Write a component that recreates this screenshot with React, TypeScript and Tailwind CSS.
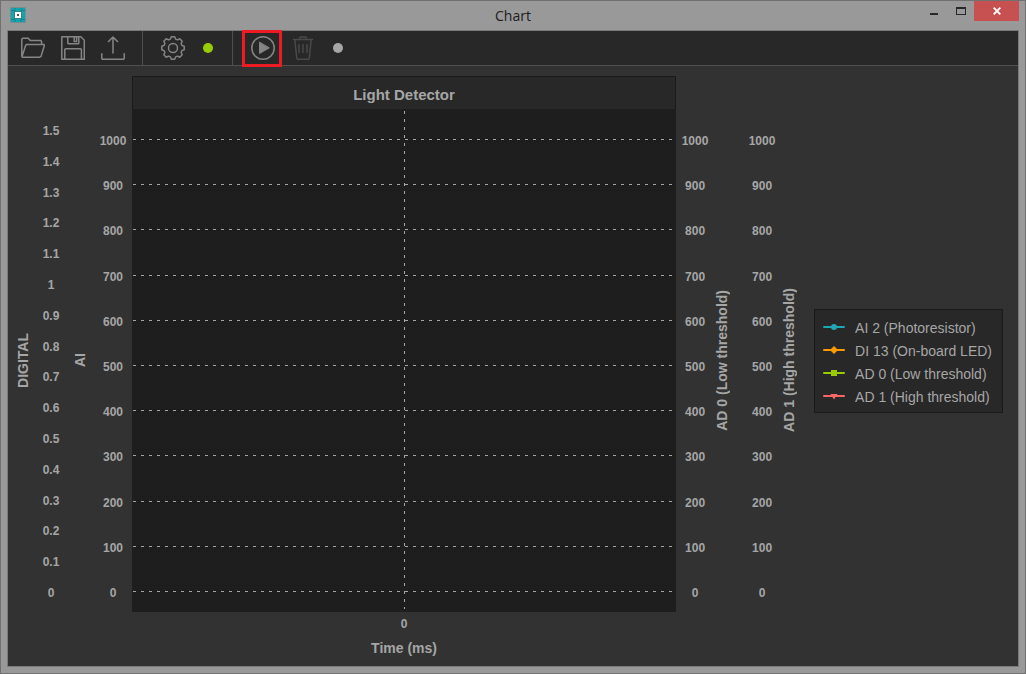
import type { ReactNode } from "react";

const DIGITAL_TICKS = ["1.5", "1.4", "1.3", "1.2", "1.1", "1", "0.9", "0.8", "0.7", "0.6", "0.5", "0.4", "0.3", "0.2", "0.1", "0"];
const ANALOG_TICKS = ["1000", "900", "800", "700", "600", "500", "400", "300", "200", "100", "0"];

const SERIES = [
  { label: "AI 2 (Photoresistor)", color: "#1ea7b4", marker: <circle cx="11" cy="4" r="3" /> },
  { label: "DI 13 (On-board LED)", color: "#ff9900", marker: <path d="M11 0l4 4-4 4-4-4z" /> },
  { label: "AD 0 (Low threshold)", color: "#99cc00", marker: <path d="M8 1h6v6H8z" /> },
  { label: "AD 1 (High threshold)", color: "#ff6666", marker: <path d="M7.5 2h7L11 7.5z" /> },
];

function ToolIcon({ children }: { children: ReactNode }) {
  return (
    <svg viewBox="0 0 24 24" className="size-6" fill="none" stroke="currentColor" strokeWidth="1.5" strokeLinejoin="round" strokeLinecap="round">
      {children}
    </svg>
  );
}

interface ToolButtonProps {
  label: string;
  disabled?: boolean;
  highlighted?: boolean;
  children: ReactNode;
}

function ToolButton({ label, disabled, highlighted, children }: ToolButtonProps) {
  return (
    <button
      type="button"
      aria-label={label}
      disabled={disabled}
      className="relative flex w-10 items-center justify-center text-[#858585] disabled:text-[#494949]"
    >
      <ToolIcon>{children}</ToolIcon>
      {highlighted && <span className="absolute -top-px -bottom-0.5 -left-px z-10 w-full border-3 border-[#ed1c24]" />}
    </button>
  );
}

function AxisTitle({ children }: { children: ReactNode }) {
  return (
    <div className="flex items-center justify-center pt-8">
      <span className="rotate-180 text-sm leading-4 font-bold whitespace-nowrap [writing-mode:vertical-rl]">{children}</span>
    </div>
  );
}

function AnalogTicks() {
  return (
    <div className="flex w-[38px] flex-col items-center justify-between justify-self-end pt-[57px] pb-[11px]">
      {ANALOG_TICKS.map((tick) => (
        <span key={tick} className="text-xs leading-4 font-bold">{tick}</span>
      ))}
    </div>
  );
}

function TitleBar() {
  return (
    <header className="grid h-[29px] grid-cols-[1fr_auto_1fr] items-start">
      <svg viewBox="0 0 16 16" className="mt-1.5 ml-[9px] size-4">
        <rect width="16" height="16" fill="#7d8b8c" />
        <rect x="1" y="1" width="14" height="14" fill="#0fa5b1" />
        <path d="M5 1v2.500H1M11 1v2.500h4M5 15v-2.500H1M11 15v-2.500h4" fill="none" stroke="#17818a" />
        <rect x="4.500" y="4.500" width="7" height="7" fill="#fff" stroke="#3b7f86" />
        <rect x="7" y="7" width="2" height="2" fill="#555" />
      </svg>
      <h1 className="pt-[5px] font-['Open_Sans',sans-serif] text-sm leading-5 text-[#1c1c1c]">Chart</h1>
      <div className="mr-1.5 flex justify-end">
        <button type="button" aria-label="Minimize" className="flex h-5 w-[27px] items-center justify-center">
          <svg viewBox="0 0 10 10" className="size-2.5"><path d="M1 7h8v2H1z" fill="#282828" /></svg>
        </button>
        <button type="button" aria-label="Maximize" className="flex h-5 w-[27px] items-center justify-center">
          <svg viewBox="0 0 10 8" className="h-2 w-2.5" shapeRendering="crispEdges">
            <path fillRule="evenodd" d="M0 0h10v8H0zM1 2v5h8V2z" fill="#282828" />
          </svg>
        </button>
        <button type="button" aria-label="Close" className="flex h-5 w-[45px] items-center justify-center bg-[#c75050]">
          <svg viewBox="0 0 8 8" className="size-2"><path d="M.7.7l6.600 6.600M7.300.7L.7 7.300" stroke="#fff" strokeWidth="1.900" /></svg>
        </button>
      </div>
    </header>
  );
}

function Toolbar() {
  return (
    <div className="flex h-[35px] items-stretch border-b border-[#505050] bg-[#282828] pl-[5px]">
      <ToolButton label="Open">
        <path d="M.8 20V3.200l1-1h5.500l1.900 2.200h10.400l1 1v2.800M1 20.800L4.600 9.400l1.100-1h17.200l.5.900L20 20.400l-1.200.8H1.500z" />
      </ToolButton>
      <ToolButton label="Save">
        <path d="M.8.800h19l3.500 3.500v19H.8zM6.800.800v6.500l.8.500h9.400l.8-.5V.8M13.200 1h2.400v4.400h-2.400zM3.800 23V13.400l.8-.6h15l.8.600V23" />
      </ToolButton>
      <ToolButton label="Export">
        <path d="M12 17V1M7.500 5.500L12 1l4.500 4.500M.8 17.800v4.900l.6.500h21.200l.6-.5v-4.900" />
      </ToolButton>
      <div className="mr-2.5 ml-[9px] w-px bg-[#505050]" />
      <ToolButton label="Settings">
        <circle cx="12" cy="12" r="4.500" />
        <path d="M10.300.8h3.400l.9 2.300 1.900.8 2.300-1.100 2.400 2.400-1.100 2.300.8 1.900 2.300.9v3.400l-2.300.9-.8 1.900 1.100 2.300-2.400 2.400-2.300-1.100-1.900.8-.9 2.300h-3.400l-.9-2.300-1.900-.8-2.300 1.100-2.400-2.400 1.100-2.300-.8-1.900-2.300-.9v-3.400l2.300-.9.8-1.900-1.100-2.300 2.400-2.400 2.300 1.100 1.900-.8z" />
      </ToolButton>
      <span className="ml-2.5 size-2.5 self-center rounded-full bg-[#99cc00]" />
      <div className="mr-2.5 ml-[19px] w-px bg-[#505050]" />
      <ToolButton label="Start" highlighted>
        <circle cx="12" cy="12" r="11.200" />
        <path d="M8.500 6.500v11l9.500-5.500z" fill="currentColor" strokeWidth="1" />
      </ToolButton>
      <ToolButton label="Delete" disabled>
        <path d="M2.500 3.500h19M9 3.300V.9h6v2.400M3.800 3.500l2 19 .8.800h10.800l.8-.8 2-19M8 8.500v8M12 8.500v8M16 8.500v8" />
      </ToolButton>
      <span className="ml-2.5 size-2.5 self-center rounded-full bg-[#a6a6a6]" />
    </div>
  );
}

function Plot() {
  return (
    <div className="flex flex-col bg-[#1e1e1e]">
      <h2 className="h-[33px] border border-b-0 border-[#1a1a1a] bg-[#282828] pt-2 text-center text-[15px] leading-5 font-bold">
        Light Detector
      </h2>
      <svg className="min-h-0 w-full flex-1 pr-1" stroke="#a6a6a6" strokeDasharray="3 5" strokeDashoffset="-1" shapeRendering="crispEdges">
        {ANALOG_TICKS.map((tick, i) => (
          <line key={tick} x1="0" x2="100%" y1={`${6.06 + i * 8.986}%`} y2={`${6.06 + i * 8.986}%`} />
        ))}
        <line x1="50.4%" x2="50.4%" y1="1" y2="99.500%" />
      </svg>
    </div>
  );
}

function Legend() {
  return (
    <div className="flex items-center pt-[34px] pl-[17px]">
      <ul className="border border-[#1a1a1a] bg-[#282828] pt-1.5 pr-2.5 pb-1 pl-2">
        {SERIES.map((series) => (
          <li key={series.label} className="flex h-[23px] items-center gap-2.5 text-sm whitespace-nowrap">
            <svg viewBox="0 0 22 8" className="-mt-0.5 h-2 w-[22px] shrink-0" fill={series.color}>
              <path d="M1 4h20" stroke={series.color} strokeWidth="2" strokeLinecap="round" />
              {series.marker}
            </svg>
            {series.label}
          </li>
        ))}
      </ul>
    </div>
  );
}

export default function App() {
  return (
    <div className="flex min-h-screen flex-col border border-[#707070] bg-[#999] px-1.5 pb-1.5 font-['Liberation_Sans',Arial,sans-serif] text-[#a6a6a6]">
      <div className="-mx-1.5">
        <TitleBar />
      </div>
      <div className="flex flex-1 flex-col border border-[#7a7a7a] bg-[#323232]">
        <Toolbar />
        <main className="grid flex-1 grid-cols-[16px_40px_18px_43px_1fr_38px_16px_51px_16px_auto] grid-rows-[1fr_auto] pt-2.5 pr-[15px] pl-[7px]">
          <AxisTitle>DIGITAL</AxisTitle>
          <div className="flex flex-col items-center justify-between pt-[47px] pb-[11px]">
            {DIGITAL_TICKS.map((tick) => (
              <span key={tick} className="text-xs leading-4 font-bold">{tick}</span>
            ))}
          </div>
          <AxisTitle>AI</AxisTitle>
          <AnalogTicks />
          <Plot />
          <AnalogTicks />
          <AxisTitle>AD 0 (Low threshold)</AxisTitle>
          <AnalogTicks />
          <AxisTitle>AD 1 (High threshold)</AxisTitle>
          <Legend />
          <div className="col-start-5 flex h-[54px] flex-col items-center gap-2 pt-1">
            <span className="text-xs leading-4 font-bold">0</span>
            <span className="text-sm leading-4 font-bold">Time (ms)</span>
          </div>
        </main>
      </div>
    </div>
  );
}
